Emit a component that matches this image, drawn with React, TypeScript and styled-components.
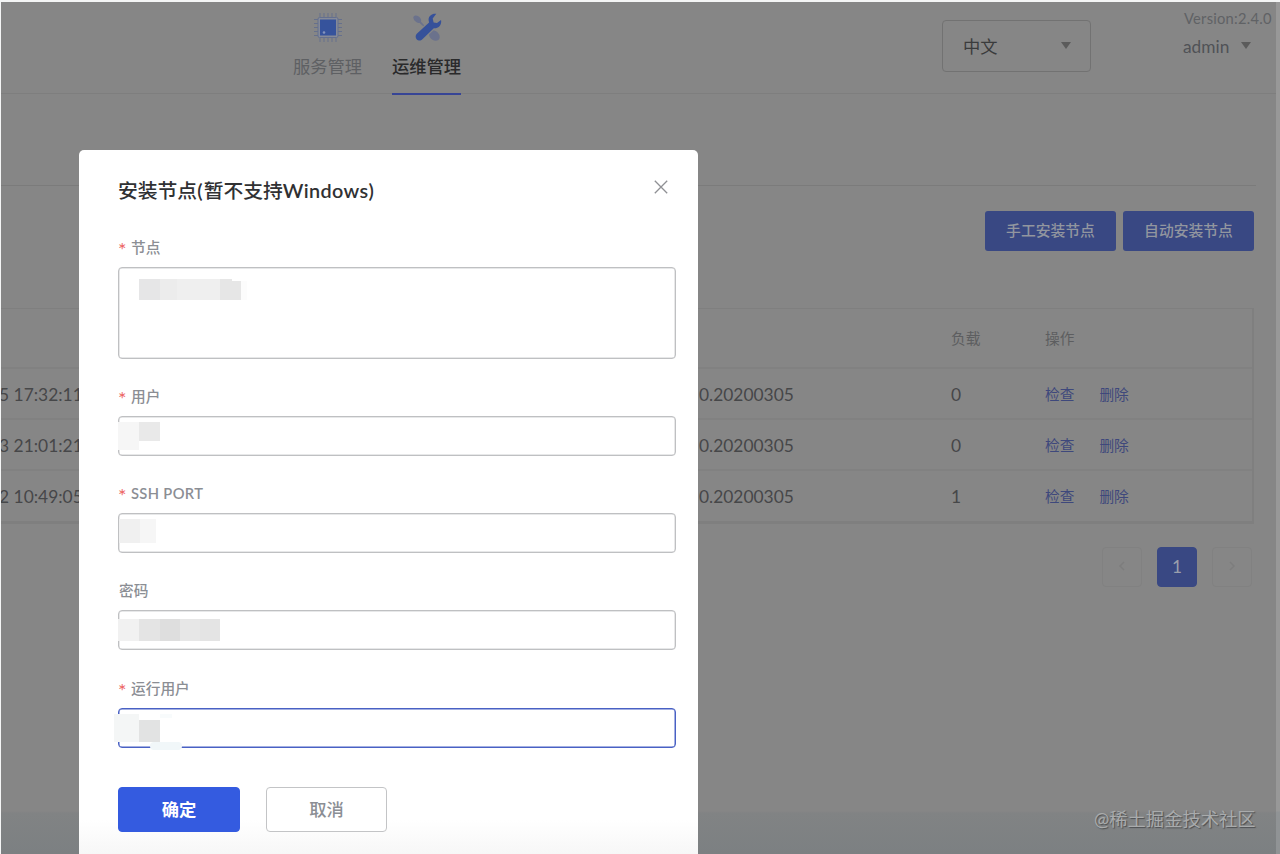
import React from "react";
import styled, { createGlobalStyle } from "styled-components";

const GlobalStyle = createGlobalStyle`
  * { box-sizing: border-box; }
  html, body { margin: 0; padding: 0; background: #fff; overflow: hidden; }
  body { font-family: Lato, "Noto Sans CJK SC", sans-serif; font-size: 17.3px; color: #444547; }
  button, textarea, input { font-family: inherit; margin: 0; }
`;

const Screen = styled.div`
  position: relative;
  width: 1280px;
  height: 854px;
  padding: 2px 0 0 1px;
  display: flex;
  overflow: hidden;
  background: #f4f5f5;
`;

const Page = styled.div`
  width: 1275px;
  height: 852px;
  flex: none;
  display: flex;
  flex-direction: column;
  overflow: hidden;
  background: linear-gradient(#868686 0 809px, #818384 811px, #7c8082 100%);
`;

const ScrollTrack = styled.div`
  flex: 1;
  background: linear-gradient(#989898 0 809px, #909395 810px);
`;

const Header = styled.header`
  height: 92px;
  flex: none;
  display: flex;
  border-bottom: 1px solid #7e7e7e;
`;

const Nav = styled.nav`
  display: flex;
  gap: 30px;
  margin-left: 292px;
  height: 93px;
`;

const NavItem = styled.a<{ $active?: boolean }>`
  width: 69px;
  display: flex;
  flex-direction: column;
  align-items: center;
  padding-top: 10px;
  white-space: nowrap;
  line-height: 26px;
  font-weight: ${(p) => (p.$active ? 500 : 400)};
  color: ${(p) => (p.$active ? "#2a2a2b" : "#5e6063")};
  border-bottom: 2px solid ${(p) => (p.$active ? "#374596" : "transparent")};
  svg { display: block; margin-bottom: 11px; }
`;

const LanguageSelect = styled.div`
  margin: 18px 0 0 481px;
  width: 149px;
  height: 52px;
  flex: none;
  display: flex;
  align-items: center;
  justify-content: space-between;
  padding: 0 19px 2px 20px;
  border: 1.5px solid #727272;
  border-radius: 4px;
  color: #3a3b3c;
`;

const Caret = styled.span`
  width: 0;
  height: 0;
  border: 5px solid transparent;
  border-top: 7px solid #5b5b5b;
  border-bottom: 0;
`;

const Account = styled.div`
  margin: 6px 0 0 92px;
  display: flex;
  flex-direction: column;
  color: #505256;
`;

const Version = styled.span`
  padding-left: 1px;
  font-size: 14.7px;
  letter-spacing: 0.25px;
  line-height: 20px;
  white-space: nowrap;
  color: #606265;
`;

const UserMenu = styled.span`
  display: flex;
  align-items: center;
  gap: 12px;
  margin-top: 7px;
  line-height: 24px;
  ${Caret} { margin-top: -4px; }
`;

const Tabs = styled.div`
  height: 92px;
  flex: none;
  width: 1255px;
  border-bottom: 1px solid #7b7b7b;
`;

const Actions = styled.div`
  display: flex;
  justify-content: flex-end;
  gap: 7px;
  width: 1253px;
  margin: 25px 0 57px;
`;

const ActionButton = styled.button`
  width: 131px;
  height: 40px;
  padding: 0 0 3px;
  border: 0;
  border-radius: 3px;
  background: #394883;
  color: #92969f;
  font-size: 14.8px;
  font-weight: 500;
`;

const Table = styled.div`
  width: 1253px;
  border: 1px solid #7f7f7f;
  border-left: 0;
  border-right-width: 2px;
  border-bottom-width: 3px;
`;

const Row = styled.div<{ $head?: boolean }>`
  height: ${(p) => (p.$head ? 60 : 51)}px;
  display: grid;
  grid-template-columns: 698px 252px 94px 1fr;
  align-items: center;
  border-bottom: 2px solid #818181;
  font-size: ${(p) => (p.$head ? "14.7px" : "17.4px")};
  padding-top: ${(p) => (p.$head ? 0 : 1)}px;
  padding-bottom: ${(p) => (p.$head ? 2 : 0)}px;
  color: ${(p) => (p.$head ? "#5d5e60" : "#464749")};
  white-space: nowrap;
  &:last-child { border-bottom: 0; height: 50px; padding-bottom: 1px; }
`;

const TimeCell = styled.span`
  margin-left: -2px;
`;

const Links = styled.span`
  display: flex;
  gap: 25px;
  font-size: 14.7px;
  padding-bottom: 2px;
  color: #3e487c;
`;

const Pagination = styled.div`
  display: flex;
  justify-content: flex-end;
  gap: 15px;
  width: 1251px;
  margin-top: 23px;
`;

const PageButton = styled.button<{ $current?: boolean }>`
  width: 40px;
  height: 40px;
  padding: 0 0 2px;
  display: grid;
  place-items: center;
  font-size: 17.3px;
  border-radius: 4px;
  border: 1px solid ${(p) => (p.$current ? "#394883" : "#818181")};
  background: ${(p) => (p.$current ? "#394883" : "transparent")};
  color: ${(p) => (p.$current ? "#9a9fac" : "#7d7d7d")};
`;

const Dialog = styled.section`
  position: absolute;
  left: 79px;
  top: 150px;
  width: 619px;
  height: 720px;
  padding: 0 22px 0 39px;
  border-radius: 5px;
  background: linear-gradient(#fff 0 670px, #f7f7f7 704px);
`;

const DialogHeader = styled.header`
  display: flex;
  justify-content: space-between;
  align-items: flex-start;
  height: 86px;
  padding: 25px 7px 0 0;
`;

const Title = styled.h2`
  margin: 0;
  font-size: 19.8px;
  line-height: 30px;
  font-weight: 500;
  color: #303133;
`;

const Latin = styled.span<{ $spacing?: number }>`
  font-weight: 600;
  letter-spacing: ${(p) => p.$spacing ?? 0.35}px;
`;

const CloseButton = styled.button`
  margin-top: 4px;
  padding: 0;
  border: 0;
  background: none;
  display: flex;
`;

const Field = styled.div<{ $height: number }>`
  height: ${(p) => p.$height}px;
`;

const Label = styled.label<{ $required?: boolean }>`
  display: flex;
  gap: 5px;
  height: 31px;
  padding-left: ${(p) => (p.$required ? 0 : 1)}px;
  line-height: 23px;
  font-size: 14.7px;
  font-weight: 500;
  white-space: nowrap;
  color: #8b8e94;
`;

const Required = styled.span`
  width: 8px;
  font-size: 20px;
  line-height: 27px;
  color: #ec6464;
  font-weight: 400;
`;

const Box = styled.div<{ $tall?: boolean; $focus?: boolean }>`
  position: relative;
  height: ${(p) => (p.$tall ? 92 : 40)}px;
  width: 558px;
  border: 1px solid ${(p) => (p.$focus ? "#4961c4" : "#bfc0c2")};
  box-shadow: inset 0 0 0 0.5px ${(p) => (p.$focus ? "#4961c4" : "#d0d1d3")};
  border-radius: 4px;
  background: #fff;
`;

const Mosaic = styled.div<{ $x: number; $y: number }>`
  position: absolute;
  left: ${(p) => p.$x}px;
  top: ${(p) => p.$y}px;
  display: flex;
  align-items: flex-start;
`;

const Tile = styled.span<{ $w: number; $h: number; $c: string; $drop?: number }>`
  width: ${(p) => p.$w}px;
  height: ${(p) => p.$h}px;
  margin-top: ${(p) => p.$drop ?? 0}px;
  background: ${(p) => p.$c};
`;

const BorderSmudge = styled.span`
  position: absolute;
  left: 31px;
  bottom: -3px;
  width: 32px;
  height: 8px;
  border-radius: 4px;
  background: #f1f7f9;
`;

const Footer = styled.footer`
  display: flex;
  gap: 26px;
`;

const DialogButton = styled.button<{ $primary?: boolean }>`
  width: ${(p) => (p.$primary ? 122 : 121)}px;
  height: 45px;
  padding: 0 0 2px;
  border-radius: 4px;
  font-size: 17.3px;
  font-weight: ${(p) => (p.$primary ? 700 : 500)};
  border: 1.5px solid ${(p) => (p.$primary ? "#345be0" : "#c3c4c6")};
  background: ${(p) => (p.$primary ? "#345be0" : "#fff")};
  color: ${(p) => (p.$primary ? "#fff" : "#8b8e94")};
`;

const Watermark = styled.div`
  position: absolute;
  left: 1094px;
  top: 805px;
  font-size: 18.3px;
  line-height: 28px;
  white-space: nowrap;
  color: #a9abac;
  text-shadow: 1px 1px 1px #4c4e50;
`;

const pins = [7, 11, 15, 19, 23];

const ChipIcon = () => (
  <svg width="30" height="31" viewBox="0 0 30 31">
    <g stroke="#66708c" strokeWidth="1">
      {pins.map((p) => (
        <g key={p}>
          <path d={`M${p} 1v4M${p} 26v4`} />
          <path d={`M1 ${p + 0.5}h4M25 ${p + 0.5}h4`} />
        </g>
      ))}
    </g>
    <rect x="5" y="5.500" width="20" height="20" rx="1.500" fill="#858a98" stroke="#65708f" />
    <rect x="7" y="7.500" width="16" height="16" fill="#36539c" />
    <circle cx="11" cy="20.500" r="1.300" fill="#8493bd" />
  </svg>
);

const ToolsIcon = () => (
  <svg width="30" height="31" viewBox="0 0 30 31">
    <g fill="#6b728c">
      <path d="M1.300 5.200C2 3.100 4.500 2.700 6.800 4.600c2 1.600 2.800 3.500 2.200 5.200l3.200 3.500-1 1-3.600-3.300C5.200 11.500 1.400 8.500 1.300 5.200Z" />
      <path d="M17 22.500l4.700-4.300c3.300.7 6.400 4 6 7.300-.4 3.200-4.200 4.200-7.300 2.200-1.900-1.200-3.300-3-3.400-5.200Z" />
    </g>
    <path
      d="M24.300 1.800c-3.900-.8-8 2-7.700 6.200.1 1 .3 1.800.5 2.500L4.800 21.800c-2 1.900-1.200 5.500 1.200 6.500 1.600.6 3.300.2 4.400-1L21.800 16.200c4.500.5 8.300-3.400 7.200-8.100l-4 2.900-3.400-.6-.9-3.800Z"
      fill="#36519a"
    />
  </svg>
);

const CloseIcon = () => (
  <svg width="16" height="16" viewBox="0 0 16 16">
    <path d="M1.800 1.800l12.400 12.400M14.200 1.800L1.800 14.200" stroke="#8f9094" strokeWidth="1.300" fill="none" />
  </svg>
);

const Chevron = ({ d }: { d: string }) => (
  <svg width="10" height="12" viewBox="0 0 10 12">
    <path d={d} fill="none" stroke="currentColor" strokeWidth="1.500" />
  </svg>
);

type TileSpec = [number, number, string, number?];

interface FieldSpec {
  label: string;
  latin?: boolean;
  required?: boolean;
  tall?: boolean;
  focus?: boolean;
  height: number;
  x: number;
  y: number;
  tiles: TileSpec[];
}

const fields: FieldSpec[] = [
  { label: "节点", required: true, tall: true, height: 149, x: 20, y: 11, tiles: [[21, 21, "#e6e6e7"], [17, 21, "#ececec"], [43, 21, "#efefef"], [12, 21, "#e6e6e6"], [9, 19, "#e6e6e6", 2], [6, 19, "#fcfcfc", 2]] },
  { label: "用户", required: true, height: 97, x: -1, y: 5, tiles: [[21, 28, "#f6f6f6"], [21, 19, "#e9e9e9"]] },
  { label: "SSH PORT", latin: true, required: true, height: 97, x: 0, y: 5, tiles: [[21, 24, "#f0f0f0"], [16, 24, "#f6f6f6"]] },
  { label: "密码", height: 98, x: -1, y: 8, tiles: [[21, 22, "#f1f1f1"], [21, 22, "#e4e4e4"], [20, 22, "#dedede"], [20, 22, "#e7e7e7"], [20, 22, "#e4e4e4"]] },
  { label: "运行用户", required: true, focus: true, height: 110, x: -5, y: 5, tiles: [[25, 28, "#f4f6f6"], [21, 22, "#e2e3e3", 6], [12, 4, "#f8fbfc"]] },
];

const rows = [
  { time: "5 17:32:11", load: 0 },
  { time: "3 21:01:21", load: 0 },
  { time: "2 10:49:05", load: 1 },
];

export default function App() {
  return (
    <>
      <GlobalStyle />
      <Screen>
        <Page>
          <Header>
            <Nav>
              <NavItem><ChipIcon />服务管理</NavItem>
              <NavItem $active><ToolsIcon />运维管理</NavItem>
            </Nav>
            <LanguageSelect>中文<Caret /></LanguageSelect>
            <Account>
              <Version>Version:2.4.0</Version>
              <UserMenu>admin<Caret /></UserMenu>
            </Account>
          </Header>
          <Tabs />
          <Actions>
            <ActionButton>手工安装节点</ActionButton>
            <ActionButton>自动安装节点</ActionButton>
          </Actions>
          <Table>
            <Row $head>
              <span />
              <span />
              <span>负载</span>
              <span>操作</span>
            </Row>
            {rows.map((row) => (
              <Row key={row.time}>
                <TimeCell>{row.time}</TimeCell>
                <span>0.20200305</span>
                <span>{row.load}</span>
                <Links><span>检查</span><span>删除</span></Links>
              </Row>
            ))}
          </Table>
          <Pagination>
            <PageButton><Chevron d="M7 2L3 6l4 4" /></PageButton>
            <PageButton $current>1</PageButton>
            <PageButton><Chevron d="M3 2l4 4-4 4" /></PageButton>
          </Pagination>
        </Page>
        <ScrollTrack />
        <Dialog>
          <DialogHeader>
            <Title>安装节点<Latin $spacing={1.2}>(</Latin>暂不支持<Latin>Windows)</Latin></Title>
            <CloseButton aria-label="关闭"><CloseIcon /></CloseButton>
          </DialogHeader>
          {fields.map((f) => (
            <Field key={f.label} $height={f.height}>
              <Label $required={f.required}>
                {f.required && <Required>*</Required>}
                {f.latin ? <Latin>{f.label}</Latin> : f.label}
              </Label>
              <Box $tall={f.tall} $focus={f.focus}>
                <Mosaic $x={f.x} $y={f.y}>
                  {f.tiles.map(([w, h, c, drop], i) => <Tile key={i} $w={w} $h={h} $c={c} $drop={drop} />)}
                </Mosaic>
                {f.focus && <BorderSmudge />}
              </Box>
            </Field>
          ))}
          <Footer>
            <DialogButton $primary>确定</DialogButton>
            <DialogButton>取消</DialogButton>
          </Footer>
        </Dialog>
        <Watermark>@稀土掘金技术社区</Watermark>
      </Screen>
    </>
  );
}
